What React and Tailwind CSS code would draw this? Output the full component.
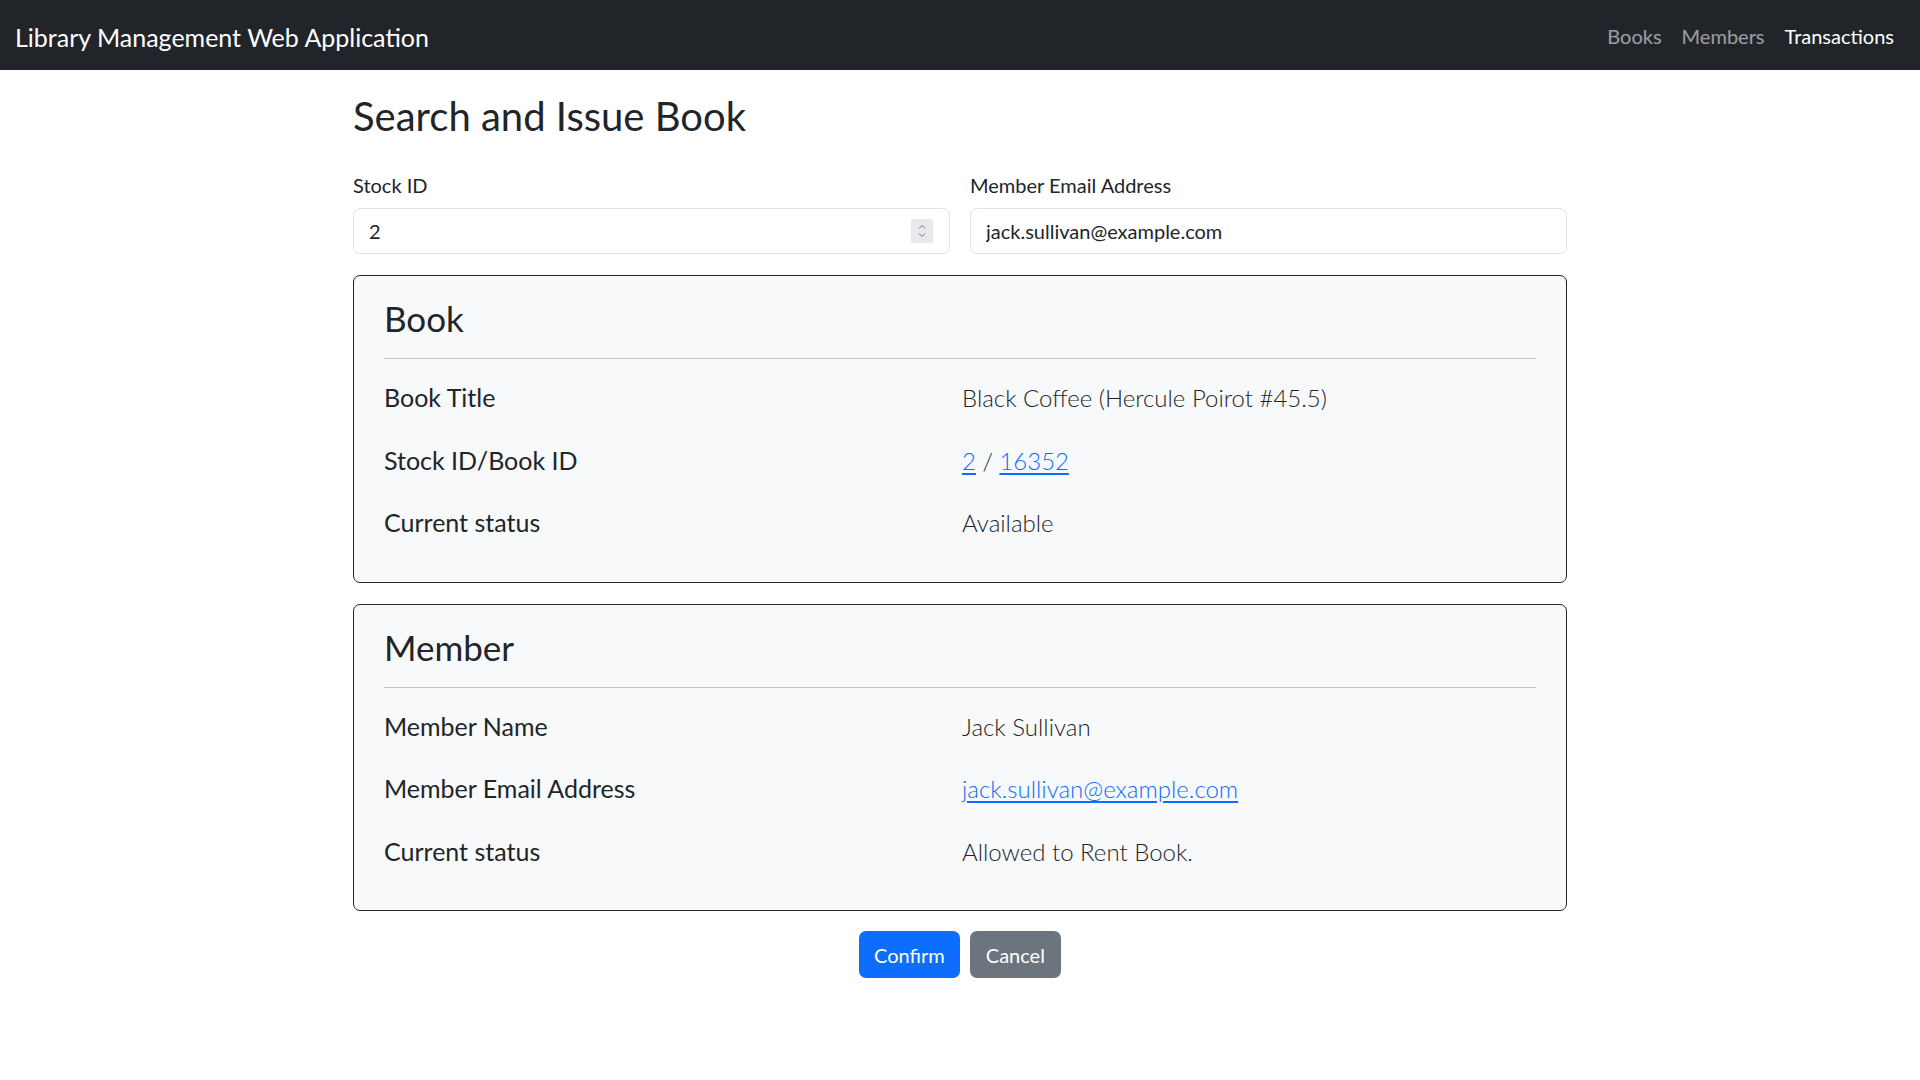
const BOOK = [
  ['Book Title', <>Black Coffee (Hercule Poirot #45.5)</>],
  ['Stock ID/Book ID', <><a href="#" className="text-[#0d6efd] underline underline-offset-[3px]">2</a> / <a href="#" className="text-[#0d6efd] underline underline-offset-[3px]">16352</a></>],
  ['Current status', <>Available</>],
];

const MEMBER = [
  ['Member Name', <>Jack Sullivan</>],
  ['Member Email Address', <a href="#" className="text-[#0d6efd] underline underline-offset-[3px]">jack.sullivan@example.com</a>],
  ['Current status', <>Allowed to Rent Book.</>],
];

function InfoCard({ title, rows }) {
  return (
    <div className="mt-[21px] bg-[#f8f9fa] border border-[#212529] rounded-[7px] px-[30px] pt-[21px] pb-[40px]">
      <h3 className="text-[35px] leading-[42px] font-normal text-[#212529]">{title}</h3>
      <div className="mt-[19px] h-px bg-[#c3c4c5]" />
      <div className="mt-[20px] flex flex-col gap-[25px]">
        {rows.map(([label, value]) => (
          <div key={label} className="grid grid-cols-2 items-baseline leading-[37.5px]">
            <div className="text-[25px] text-[#212529]">{label}</div>
            <div className="pl-[2px] text-[24px] font-light text-[#212529]">{value}</div>
          </div>
        ))}
      </div>
    </div>
  );
}

function Spinner() {
  return (
    <div className="absolute right-[17px] top-1/2 -translate-y-1/2 w-[22px] h-[24px] bg-[#e9e9ed] rounded-[2px]">
      <svg width="22" height="24" viewBox="0 0 22 24" fill="none" stroke="#707070" strokeWidth="1">
        <path d="M8 9.5 L11 6.5 L14 9.5" />
        <path d="M8 14.5 L11 17.5 L14 14.5" />
      </svg>
    </div>
  );
}

export default function App() {
  return (
    <div className="min-h-screen bg-white text-[#212529] font-[family-name:Lato,sans-serif]">
      <nav className="h-[70px] bg-[#212529] flex items-center justify-between pl-[15px] pr-[16px]">
        <a href="#" className="text-[25px] text-white leading-[38px] pt-[4px]">Library Management Web Application</a>
        <div className="flex items-center text-[20px] pt-[2px]">
          <a href="#" className="px-[10px] text-white/55">Books</a>
          <a href="#" className="px-[10px] text-white/55">Members</a>
          <a href="#" className="px-[10px] text-white">Transactions</a>
        </div>
      </nav>

      <main className="w-[1214px] mx-auto pb-10">
        <h2 className="mt-[22px] text-[40px] leading-[48px] font-normal">Search and Issue Book</h2>

        <div className="mt-[30px] grid grid-cols-2 gap-x-[20px]">
          <div>
            <label className="block text-[20px] leading-[30px] mb-[8px]">Stock ID</label>
            <div className="relative">
              <input readOnly value="2" className="w-full h-[46px] px-[15px] text-[20px] bg-white border border-[#dee2e6] rounded-[7px] outline-none" />
              <Spinner />
            </div>
          </div>
          <div>
            <label className="block text-[20px] leading-[30px] mb-[8px]">Member Email Address</label>
            <input readOnly value="jack.sullivan@example.com" className="w-full h-[46px] px-[15px] text-[20px] bg-white border border-[#dee2e6] rounded-[7px] outline-none" />
          </div>
        </div>

        <InfoCard title="Book" rows={BOOK} />
        <InfoCard title="Member" rows={MEMBER} />

        <div className="mt-[20px] flex justify-center gap-[10px]">
          <button className="h-[47px] px-[15px] text-[20px] text-white bg-[#0d6efd] rounded-[7px]">Confirm</button>
          <button className="h-[47px] px-[16px] text-[20px] text-white bg-[#6c757d] rounded-[7px]">Cancel</button>
        </div>
      </main>
    </div>
  );
}
